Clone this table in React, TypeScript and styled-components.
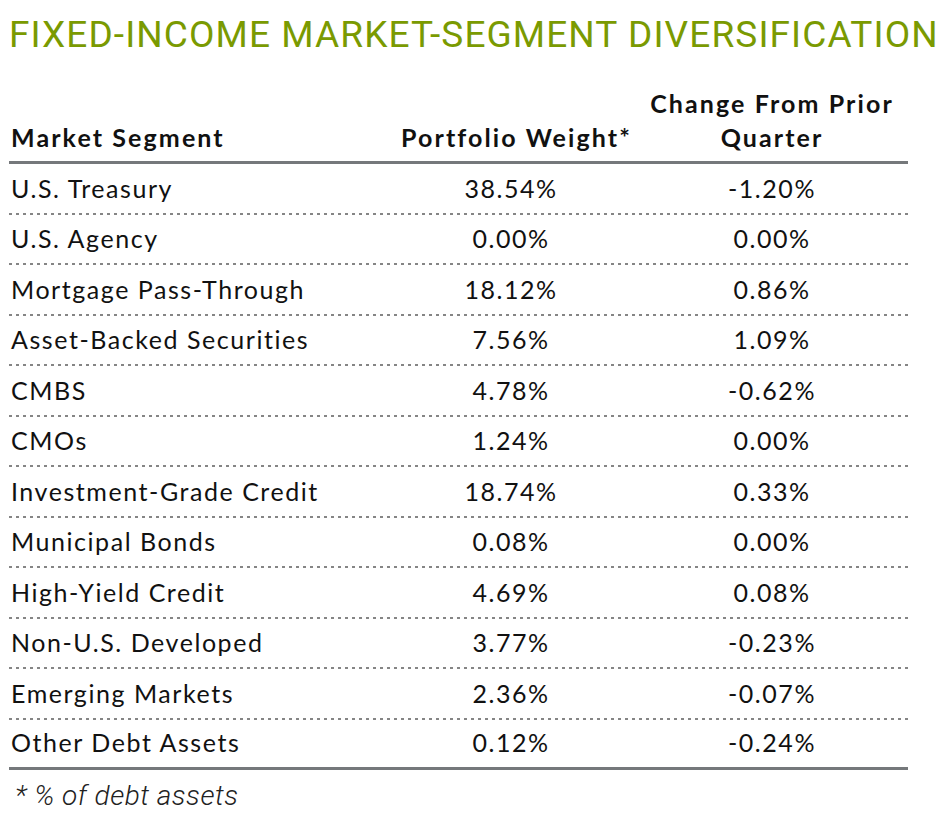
import React from "react";
import styled, { createGlobalStyle } from "styled-components";

const Global = createGlobalStyle`
  html, body { margin: 0; padding: 0; background: #fff; }
  body { font-family: Lato, "Open Sans", sans-serif; color: #111; }
`;

const Page = styled.div`
  width: 945px;
  padding: 14px 0 0 9px;
  box-sizing: border-box;
`;

const Title = styled.h1`
  margin: 0;
  font-family: Roboto, "Liberation Sans", sans-serif;
  font-weight: 400;
  font-size: 37px;
  line-height: 42px;
  letter-spacing: 1.1px;
  color: #7a9a01;
  white-space: nowrap;
`;

const Table = styled.div`
  width: 899px;
  margin-top: 30px;
`;

const Grid = styled.div`
  display: grid;
  grid-template-columns: 392px 220px 1fr;
  align-items: center;
`;

const HeadRow = styled(Grid)`
  align-items: end;
  border-bottom: 3px solid #75787b;
  padding-bottom: 7px;
`;

const HeadCell = styled.div<{ $center?: boolean; $shift?: number }>`
  font-weight: 700;
  font-size: 25px;
  line-height: 34px;
  letter-spacing: 2.1px;
  white-space: nowrap;
  text-align: ${(p) => (p.$center ? "center" : "left")};
  padding-left: ${(p) => p.$shift ?? 2}px;
`;

const Row = styled(Grid)<{ $last?: boolean }>`
  height: 50.5px;
  background-image: ${(p) =>
    p.$last
      ? "none"
      : "repeating-linear-gradient(to right, #858585 0 3px, transparent 3px 7px)"};
  background-size: 100% 2px;
  background-repeat: no-repeat;
  background-position: bottom left;
  border-bottom: ${(p) => (p.$last ? "3px solid #75787b" : "none")};
  box-sizing: border-box;
`;

const Cell = styled.div<{ $center?: boolean; $shift?: number }>`
  font-size: 25px;
  line-height: 30px;
  letter-spacing: 1.55px;
  padding-bottom: 3px;
  white-space: nowrap;
  text-align: ${(p) => (p.$center ? "center" : "left")};
  padding-left: ${(p) => p.$shift ?? 2}px;
`;

const Note = styled.div`
  margin-top: 9px;
  padding-left: 6px;
  font-family: Roboto, "Liberation Sans", sans-serif;
  font-style: italic;
  font-weight: 300;
  font-size: 28px;
  letter-spacing: 0.5px;
  color: #222;
`;

const rows: [string, string, string][] = [
  ["U.S. Treasury", "38.54%", "-1.20%"],
  ["U.S. Agency", "0.00%", "0.00%"],
  ["Mortgage Pass-Through", "18.12%", "0.86%"],
  ["Asset-Backed Securities", "7.56%", "1.09%"],
  ["CMBS", "4.78%", "-0.62%"],
  ["CMOs", "1.24%", "0.00%"],
  ["Investment-Grade Credit", "18.74%", "0.33%"],
  ["Municipal Bonds", "0.08%", "0.00%"],
  ["High-Yield Credit", "4.69%", "0.08%"],
  ["Non-U.S. Developed", "3.77%", "-0.23%"],
  ["Emerging Markets", "2.36%", "-0.07%"],
  ["Other Debt Assets", "0.12%", "-0.24%"],
];

export default function App() {
  return (
    <Page>
      <Global />
      <Title>FIXED-INCOME MARKET-SEGMENT DIVERSIFICATION</Title>
      <Table>
        <HeadRow>
          <HeadCell>Market Segment</HeadCell>
          <HeadCell $center $shift={0}>Portfolio Weight*</HeadCell>
          <HeadCell $center $shift={15}>
            Change From Prior
            <br />
            Quarter
          </HeadCell>
        </HeadRow>
        {rows.map((r, i) => (
          <Row key={r[0]} $last={i === rows.length - 1}>
            <Cell>{r[0]}</Cell>
            <Cell $center $shift={0}>{r[1]}</Cell>
            <Cell $center $shift={15}>{r[2]}</Cell>
          </Row>
        ))}
      </Table>
      <Note>* % of debt assets</Note>
    </Page>
  );
}
